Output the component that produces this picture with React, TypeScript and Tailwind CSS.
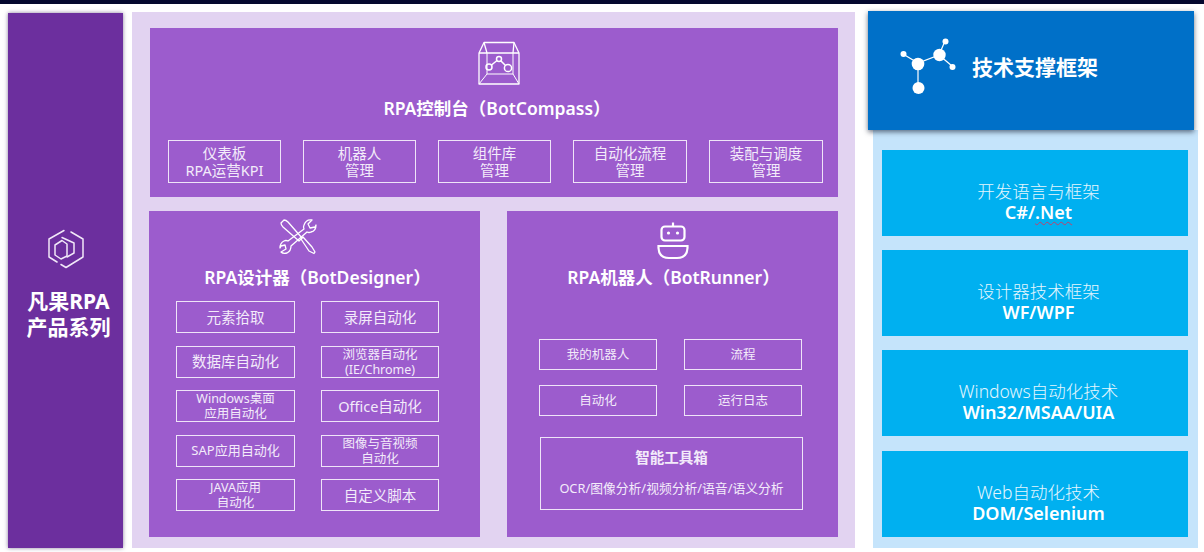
import React from "react";

const F = "font-['Noto_Sans','Noto_Sans_CJK_SC',sans-serif]";

function Box({ a, b, className }: { a: string; b?: string; className: string }) {
  return (
    <div className={"flex flex-col items-center justify-center border border-[#efe4f8] text-[#f3ebfa] " + className}>
      <div className="whitespace-nowrap">{a}</div>
      {b && <div className="whitespace-nowrap">{b}</div>}
    </div>
  );
}

function ConsoleIcon() {
  return (
    <svg width="42" height="44" viewBox="0 0 42 44" fill="none" stroke="#fff" strokeWidth="1.3" strokeLinejoin="round">
      <path d="M1 12 L6 1.500 H36 L41 12 V43 H1 Z" />
      <path d="M1 12 H41 M6 1.500 L9 12 M36 1.500 L35 12" />
      <path d="M9 12 V33 M35 12 V33 M9 33 H35 M9 33 L1 43 M35 33 L41 43" strokeWidth="1" />
      <circle cx="11" cy="26" r="3" strokeWidth="1.500" />
      <circle cx="21" cy="18" r="2.500" strokeWidth="1.500" />
      <circle cx="30" cy="27" r="3.600" strokeWidth="1.500" />
      <path d="M13.500 24 L19 19.500 M23 20 L27.500 24.500" strokeWidth="1.500" />
    </svg>
  );
}

function ToolsIcon() {
  return (
    <svg width="40" height="38" viewBox="0 0 40 38" fill="none" stroke="#fff" strokeWidth="1.3" strokeLinejoin="round">
      <path d="M2 5 L5 2 Q7 2 9 4 L23 20 L20 23 L4 9 Q2 7 2 5 Z" />
      <path d="M22 21 L24 19 L33 29 L36 34 L35 35.500 L30 33 Z" />
      <path d="M25 7 Q27 1 33 2 L29 6 L31 10 L36 9 L37 7 Q37 13 32 14 Q30 15 28 14 L12 28 Q12 33 8 35 Q4 36 2 34 L7 31 L6 27 L2 28 L1 30 Q1 25 5 23 Q7 22 9 23 L25 11 Q24 9 25 7 Z" />
    </svg>
  );
}

function RobotIcon() {
  return (
    <svg width="32" height="38" viewBox="0 0 32 38" fill="none" stroke="#fff" strokeWidth="2.200">
      <path d="M16 0.500 V4.500" />
      <rect x="4.500" y="4.500" width="23" height="14" rx="3.500" />
      <circle cx="11.500" cy="11" r="1.600" fill="#fff" stroke="none" />
      <circle cx="20.500" cy="11" r="1.600" fill="#fff" stroke="none" />
      <path d="M1.500 24 H30.500 V26 Q30 36 20 36 H12 Q2 36 1.500 26 Z" />
    </svg>
  );
}

function MoleculeIcon() {
  return (
    <svg width="56" height="58" viewBox="0 0 56 58" fill="#fff" stroke="#fff" strokeWidth="1.200">
      <path d="M3 16 L18 25 L39 17 L45 3 M39 17 L52 28 M18 25 L18 50" fill="none" />
      <circle cx="3.500" cy="16" r="3" stroke="none" />
      <circle cx="18" cy="26" r="6.300" stroke="none" />
      <circle cx="39.500" cy="17" r="6.200" stroke="none" />
      <circle cx="45.500" cy="3.500" r="3" stroke="none" />
      <circle cx="52.500" cy="29" r="3" stroke="none" />
      <circle cx="18.500" cy="50" r="6" stroke="none" />
    </svg>
  );
}

function HexIcon() {
  return (
    <svg width="38" height="40" viewBox="0 0 38 40" fill="none" stroke="#f1e8f8" strokeWidth="1.500" strokeLinejoin="round" strokeLinecap="round">
      <path d="M17 1.500 L2 10 V28 L10 33 M14 35.500 L19 38.500 L36 28 V10 L24 3" />
      <path d="M8 16 L15 11.500 L20 15 V27 L14 30 L8 26 Z" />
      <path d="M15 8.500 L27 14 V24 L20 28" />
    </svg>
  );
}

function TechCell({ a, b, u, className }: { a: string; b: string; u?: boolean; className?: string }) {
  return (
    <div className={"flex h-[86px] flex-col items-center justify-center bg-[#00b0f0] pl-[7px] pt-[18px] leading-[21px] text-white " + (className ?? "")}>
      <div className="text-[17.500px] font-light text-[#e4f6fe]">{a}</div>
      <div className="text-[18px] font-semibold">
        {u ? (
          <>
            C#/<span className="underline decoration-[#c2406a] decoration-wavy decoration-1 underline-offset-[2px]">.Net</span>
          </>
        ) : (
          b
        )}
      </div>
    </div>
  );
}

export default function App() {
  const dBox = "h-[32px] text-[14.500px] leading-[15px]";
  const dBoxSm = "h-[32px] text-[12.500px] leading-[15px]";
  const tBox = "h-[43px] text-[14.500px] leading-[17px]";
  const title = "text-[17.500px] font-semibold leading-[24px]";
  return (
    <div className={"h-[552px] w-[1204px] overflow-hidden bg-white " + F}>
      <div className="h-[4px] bg-[#04082e]" />
      <div className="flex items-start pl-[8px] pt-[7px]">
        {/* left column */}
        <div className="mt-[2px] flex h-[535px] w-[115px] flex-col items-center bg-[#6c2f9e] pt-[216px] text-white shadow-[0_0_4px_rgba(60,40,90,0.6)]">
          <HexIcon />
          <div className="ml-[6px] mt-[19px] text-center text-[21px] font-bold leading-[26px] whitespace-nowrap">
            <div>凡果RPA</div>
            <div>产品系列</div>
          </div>
        </div>

        {/* centre panel */}
        <div className="ml-[9px] mt-[1px] h-[536px] w-[723px] bg-[#e2d3f1] pl-[18px] pt-[16px]">
          <div className="flex h-[169px] w-[688px] flex-col items-center bg-[#9c5ccd] text-white">
            <div className="ml-[10px] mt-[13px]"><ConsoleIcon /></div>
            <div className={"ml-[6px] mt-[11px] " + title}>RPA控制台（BotCompass）</div>
            <div className="mt-[20px] flex w-full justify-between pl-[18px] pr-[15px]">
              <Box a="仪表板" b="RPA运营KPI" className={"w-[113px] " + tBox} />
              <Box a="机器人" b="管理" className={"w-[113px] " + tBox} />
              <Box a="组件库" b="管理" className={"w-[113px] " + tBox} />
              <Box a="自动化流程" b="管理" className={"w-[114px] " + tBox} />
              <Box a="装配与调度" b="管理" className={"w-[114px] " + tBox} />
            </div>
          </div>

          <div className="mt-[14px] flex">
            {/* designer */}
            <div className="-ml-px flex h-[326px] w-[331px] flex-col items-center bg-[#9c5ccd] text-white">
              <div className="mr-[32px] mt-[7px]"><ToolsIcon /></div>
              <div className={"ml-[6px] mt-[9px] " + title}>RPA设计器（BotDesigner）</div>
              <div className="mt-[12px] grid w-full grid-cols-[119px_118px] gap-x-[26px] gap-y-[12.500px] pl-[27px]">
                <Box a="元素拾取" className={dBox} />
                <Box a="录屏自动化" className={dBox} />
                <Box a="数据库自动化" className={dBox} />
                <Box a="浏览器自动化" b="(IE/Chrome)" className={dBoxSm} />
                <Box a="Windows桌面" b="应用自动化" className={dBoxSm} />
                <Box a="Office自动化" className={dBox} />
                <Box a="SAP应用自动化" className="h-[32px] text-[13px] leading-[15px]" />
                <Box a="图像与音视频" b="自动化" className={dBoxSm} />
                <Box a="JAVA应用" b="自动化" className={dBoxSm} />
                <Box a="自定义脚本" className={dBox} />
              </div>
            </div>

            {/* runner */}
            <div className="ml-[27px] flex h-[326px] w-[331px] flex-col items-center bg-[#9c5ccd] text-white">
              <div className="mt-[11px]"><RobotIcon /></div>
              <div className={"ml-[2px] mt-[5px] " + title}>RPA机器人（BotRunner）</div>
              <div className="mt-[50px] grid w-full grid-cols-[118px_118px] gap-x-[27px] gap-y-[15px] pl-[32px]">
                <Box a="我的机器人" className="h-[31px] pt-px text-[12.500px]" />
                <Box a="流程" className="h-[31px] pt-px text-[12.500px]" />
                <Box a="自动化" className="h-[31px] pt-px text-[12.500px]" />
                <Box a="运行日志" className="h-[31px] pt-px text-[12.500px]" />
              </div>
              <div className="-ml-[2px] mt-[21px] flex h-[73px] w-[263px] flex-col items-center border border-[#efe4f8] text-[#f3ebfa]">
                <div className="mt-[8px] text-[14.500px] font-semibold leading-[22px]">智能工具箱</div>
                <div className="mt-[10px] text-[12.800px] leading-[20px]">OCR/图像分析/视频分析/语音/语义分析</div>
              </div>
            </div>
          </div>
        </div>

        {/* right column */}
        <div className="ml-[13px] flex w-[330px] flex-col">
          <div className="relative z-10 flex h-[119px] w-[326px] items-center bg-[#0070c8] pb-[8px] pl-[32px] text-white shadow-[0_2px_5px_rgba(30,40,60,0.65)]">
            <MoleculeIcon />
            <div className="ml-[16px] mt-[2px] text-[21px] font-bold">技术支撑框架</div>
          </div>
          <div className="ml-[5px] flex h-[418px] w-[325px] flex-col gap-[14px] bg-[#c5e4fb] pl-[9px] pr-[10px] pt-[20px]">
            <TechCell a="开发语言与框架" b="C#/.Net" u />
            <TechCell a="设计器技术框架" b="WF/WPF" />
            <TechCell a="Windows自动化技术" b="Win32/MSAA/UIA" />
            <TechCell a="Web自动化技术" b="DOM/Selenium" className="mt-px" />
          </div>
        </div>
      </div>
    </div>
  );
}
